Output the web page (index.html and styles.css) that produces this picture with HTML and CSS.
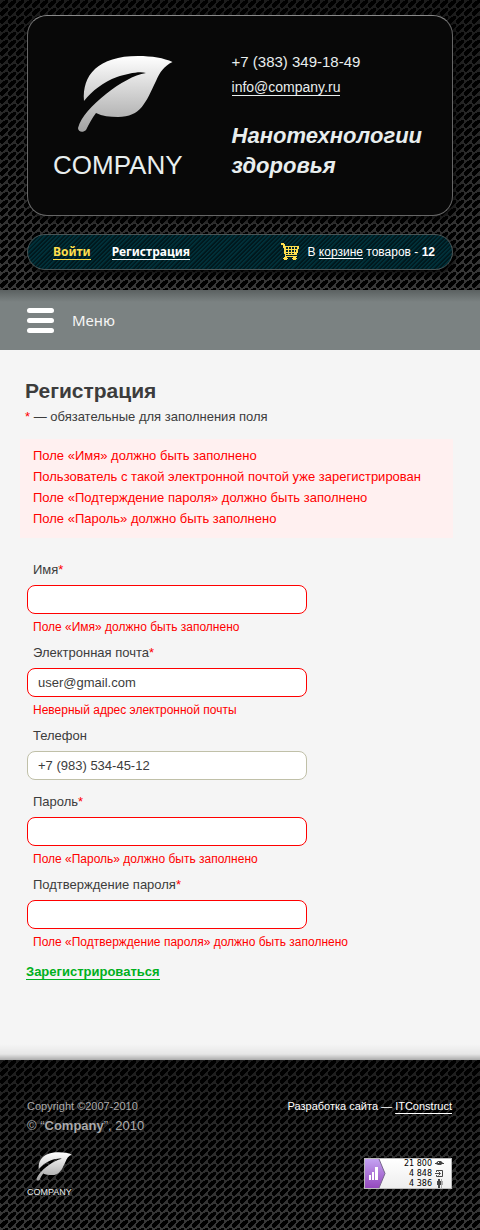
FILE: index.html
```html
<!DOCTYPE html>
<html lang="ru">
<head>
<meta charset="utf-8">
<meta name="viewport" content="width=device-width, initial-scale=1">
<title>Регистрация</title>
<link rel="stylesheet" href="styles.css">
</head>
<body>
<svg class="defs" aria-hidden="true">
  <defs>
    <linearGradient id="leaf-fill" x1="0" y1="0" x2="0" y2="1">
      <stop offset="0" stop-color="#fff"/>
      <stop offset="1" stop-color="#a2a2a2"/>
    </linearGradient>
    <symbol id="leaf" viewBox="0 0 96 78">
      <path fill="url(#leaf-fill)" d="M7 46C5 20 21 1 61 1c14 0 26 2 34.500 6C87 11 83 17 79 26 69 47 64 62 41 62c-8 0-16-1-22-4-4 5-7 11-10 17C6 78 1 77 1 73c3-11 14-23 28-34C43 28 57 20 69 18c-7-2-19 1-29 4C26 27 15 36 7 46Z"/>
    </symbol>
  </defs>
</svg>

<header class="header">
  <div class="card">
    <a class="logo" href="#">
      <svg class="logo-leaf"><use href="#leaf"/></svg>
      <span class="logo-name">COMPANY</span>
    </a>
    <div class="contacts">
      <span class="phone">+7 (383) 349-18-49</span>
      <a class="mail" href="#">info@company.ru</a>
      <p class="slogan">Нанотехнологии здоровья</p>
    </div>
  </div>
  <div class="userbar">
    <a class="login" href="#">Войти</a>
    <a class="signup" href="#">Регистрация</a>
    <div class="cart">
      <svg class="cart-icon" viewBox="0 0 18 18" shape-rendering="crispEdges" aria-hidden="true">
        <path fill="#ffdf4d" d="M0 0h3v1h1v2h14v3h-1v4h-1v2H5v1h11v1h-1v1h1v1h-1v1h-3v-1h-1v-1h1v-1H6v1h1v1H6v1H3v-1H2v-1h1v-1h1v-3H3V5H2V2H0z"/>
        <path fill="#00262e" d="M5 4h2v2H5zM8 4h2v2H8zM11 4h2v2h-2zM14 4h2v2h-2zM5 7h2v2H5zM8 7h2v2H8zM11 7h2v2h-2zM14 7h1v2h-1zM5 10h2v1H5zM8 10h2v1H8zM11 10h2v1h-2z"/>
      </svg>
      <span>В <a class="cart-link" href="#">корзине</a> товаров - <b>12</b></span>
    </div>
  </div>
</header>

<nav class="menu">
  <button class="menu-button" type="button">
    <span class="burger"><i></i><i></i><i></i></span>
    Меню
  </button>
</nav>

<main class="content">
  <h1>Регистрация</h1>
  <p class="note"><span class="star">*</span> — обязательные для заполнения поля</p>
  <ul class="errors">
    <li>Поле «Имя» должно быть заполнено</li>
    <li>Пользователь с такой электронной почтой уже зарегистрирован</li>
    <li>Поле «Подтерждение пароля» должно быть заполнено</li>
    <li>Поле «Пароль» должно быть заполнено</li>
  </ul>
  <form class="form">
    <div class="field invalid">
      <label for="name">Имя<span class="star">*</span></label>
      <input id="name" type="text">
      <p class="hint">Поле «Имя» должно быть заполнено</p>
    </div>
    <div class="field invalid">
      <label for="email">Электронная почта<span class="star">*</span></label>
      <input id="email" type="text" value="user@gmail.com">
      <p class="hint">Неверный адрес электронной почты</p>
    </div>
    <div class="field">
      <label for="phone">Телефон</label>
      <input id="phone" type="text" value="+7 (983) 534-45-12">
    </div>
    <div class="field invalid">
      <label for="password">Пароль<span class="star">*</span></label>
      <input id="password" type="password">
      <p class="hint">Поле «Пароль» должно быть заполнено</p>
    </div>
    <div class="field invalid">
      <label for="confirm">Подтверждение пароля<span class="star">*</span></label>
      <input id="confirm" type="password">
      <p class="hint">Поле «Подтверждение пароля» должно быть заполнено</p>
    </div>
    <button class="submit" type="submit">Зарегистрироваться</button>
  </form>
</main>

<footer class="footer">
  <div class="footer-left">
    <p class="copyright">Copyright ©2007-2010</p>
    <p class="owner">© “<b>Company</b>”, 2010</p>
    <a class="logo logo-small" href="#">
      <svg class="logo-leaf"><use href="#leaf"/></svg>
      <span class="logo-name">COMPANY</span>
    </a>
  </div>
  <div class="footer-right">
    <p class="developer">Разработка сайта — <a href="#">ITConstruct</a></p>
    <div class="counter">
      <svg class="counter-mark" viewBox="0 0 22 29" aria-hidden="true">
        <defs><linearGradient id="violet" x1="0" y1="0" x2="0" y2="1"><stop offset="0" stop-color="#c4a3f2"/><stop offset="1" stop-color="#9549be"/></linearGradient></defs>
        <path fill="url(#violet)" d="M0 0h14l6 14.500L14 29H0z"/>
        <path fill="none" stroke="#77658b" d="M14 0l6 14.500L14 29"/>
        <path fill="#fff" d="M4 16h2v5H4zM7 13h2v8H7zM10 8h3v13h-3z"/>
      </svg>
      <div class="counter-rows">
        <span>21 800</span>
        <svg viewBox="0 0 9 9" aria-hidden="true"><path fill="#444" d="M0 4h1l2-2h3l2 2h1v1H7L6 6H3L1 5H0z"/><path fill="#fff" d="M3 3h1v1H3z"/></svg>
        <span>4 848</span>
        <svg viewBox="0 0 9 9" aria-hidden="true"><path fill="none" stroke="#444" d="M1.500 3V1.500h6v6h-6V6M0 4.500h5M3.500 2.500l2 2-2 2"/></svg>
        <span>4 386</span>
        <svg viewBox="0 0 9 9" aria-hidden="true"><path fill="#444" d="M3 0h2v2H3zM2 2h4v4H5v3H3V6H2z"/><path fill="#aaa" d="M6 0h1v2h1v4H7v3H6z"/></svg>
      </div>
    </div>
  </div>
</footer>
</body>
</html>
```
FILE: styles.css
```css
:root {
  --weave: url("data:image/svg+xml,%3Csvg xmlns='http://www.w3.org/2000/svg' width='8' height='8' shape-rendering='crispEdges'%3E%3Crect width='8' height='8' fill='%23383838'/%3E%3Cpath d='M5 0h3v3h-1v1h-1v1h-1v1h-1v1h-1v1h-2v-1h-1v-3h1v-1h1v-1h1v-1h2z' fill='%23000'/%3E%3C/svg%3E");
}

* {
  box-sizing: border-box;
}

body {
  margin: 0;
  background: #f5f5f5;
  color: #3c3c3c;
  font: 13px/20px "Liberation Sans", Arial, sans-serif;
}

h1, p, ul {
  margin: 0;
  padding: 0;
}

.defs {
  position: absolute;
  width: 0;
  height: 0;
}

.header {
  padding: 15px 27px 20px;
  background: linear-gradient(rgba(0, 0, 0, .5), rgba(0, 0, 0, 0)), var(--weave);
}

.card {
  display: flex;
  gap: 49px;
  padding: 33px 20px 30px 25px;
  border: 1px solid #666;
  border-top-color: #888;
  border-radius: 20px;
  background: #080808;
  box-shadow: 3px 3px 8px rgba(0, 0, 0, .8);
}

.logo {
  display: flex;
  flex-direction: column;
  color: #e8eeee;
  text-decoration: none;
}

.logo-leaf {
  width: 96px;
  height: 78px;
  margin: 6px 0 12px 24px;
}

.logo-name {
  font-size: 26px;
  line-height: 40px;
}

.contacts {
  display: flex;
  flex-direction: column;
  align-items: flex-start;
  color: #e8eeee;
}

.phone {
  font-size: 15px;
  line-height: 26px;
}

.mail {
  margin-top: 4px;
  border-bottom: 1px solid;
  color: inherit;
  font-size: 14px;
  line-height: 16px;
  text-decoration: none;
}

.slogan {
  margin-top: 25px;
  font-size: 22px;
  font-weight: bold;
  font-style: italic;
  line-height: 30px;
}

.userbar {
  display: flex;
  align-items: center;
  gap: 21px;
  height: 36px;
  margin-top: 18px;
  padding: 0 17px 0 25px;
  border: 1px solid #4a5556;
  border-radius: 18px;
  background: repeating-linear-gradient(135deg, #003039 0 1px, #00181d 2px 3px);
  box-shadow: 2px 3px 6px #000;
  color: #fff;
  font-size: 12px;
}

.login, .signup {
  border-bottom: 1px solid;
  color: #fff;
  font: bold 12px/14px "Noto Sans", Tahoma, sans-serif;
  text-decoration: none;
}

.login {
  color: #ffdf4d;
}

.cart {
  display: flex;
  align-items: center;
  gap: 9px;
  margin-left: auto;
}

.cart-icon {
  width: 18px;
  height: 18px;
}

.cart-link {
  color: inherit;
  text-underline-offset: 2px;
}

.menu {
  padding: 10px 27px;
  background: linear-gradient(#5b6161, rgba(91, 97, 97, 0) 12px), #7b8282;
}

.menu-button {
  display: flex;
  align-items: center;
  gap: 18px;
  height: 40px;
  padding: 0;
  border: 0;
  background: none;
  color: #f5f5f5;
  font: 15px/20px "Noto Sans", Tahoma, sans-serif;
}

.burger {
  display: grid;
  gap: 5px;
  width: 27px;
}

.burger i {
  height: 5px;
  border-radius: 3px;
  background: #fff;
}

.content {
  padding: 29px 27px 80px 25px;
  background: linear-gradient(rgba(0, 0, 0, 0) calc(100% - 16px), rgba(0, 0, 0, .06) calc(100% - 6px), rgba(0, 0, 0, .3)), #f5f5f5;
}

h1 {
  font-size: 21px;
  line-height: 24px;
}

.note {
  margin-top: 4px;
}

.star {
  color: #f00;
}

.errors {
  margin: 12px 0 0 -5px;
  padding: 6px 13px 9px;
  background: #fff0f0;
  color: #f00;
  line-height: 21px;
  list-style: none;
}

.form {
  display: flex;
  flex-direction: column;
  align-items: flex-start;
  padding: 22px 0 0 2px;
}

.field {
  display: flex;
  flex-direction: column;
  width: 100%;
  margin-bottom: 12px;
}

.field.invalid {
  margin-bottom: 6px;
}

.field label,
.hint {
  padding-left: 6px;
}

.field input {
  width: 280px;
  max-width: 100%;
  height: 29px;
  margin: 5px 0 3px;
  padding: 0 10px;
  border: 1px solid #c0c0a8;
  border-radius: 8px;
  background: #fff;
  color: inherit;
  font: inherit;
}

.field:not(.invalid) input {
  margin-bottom: 0;
}

.field.invalid input {
  border-color: #f00;
}

.hint {
  color: #f00;
  font-size: 12px;
}

.submit {
  margin: 6px 0 0 -1px;
  padding: 0;
  border: 0;
  border-bottom: 1px solid #00b020;
  background: none;
  color: #00b020;
  font: bold 13px/15px "Liberation Sans", Arial, sans-serif;
}

.footer {
  display: flex;
  justify-content: space-between;
  padding: 36px 28px 32px 27px;
  background: linear-gradient(rgba(0, 0, 0, .5), rgba(0, 0, 0, 0)), var(--weave);
  color: #aaa;
}

.copyright,
.developer {
  font-size: 11px;
}

.logo-small {
  margin-top: 16px;
}

.logo-small .logo-leaf {
  width: 36px;
  height: 29px;
  margin: 0 0 5px 9px;
}

.logo-small .logo-name {
  font-size: 9px;
  line-height: 12px;
}

.footer-right {
  display: flex;
  flex-direction: column;
  align-items: flex-end;
  gap: 42px;
  color: #fff;
}

.developer a {
  color: inherit;
  text-underline-offset: 3px;
}

.counter {
  display: flex;
  justify-content: space-between;
  width: 88px;
  height: 31px;
  padding-right: 7px;
  border: 1px solid #bbb;
  background: linear-gradient(#fff, #eee);
}

.counter-mark {
  width: 22px;
  height: 29px;
}

.counter-rows {
  display: grid;
  grid-template-columns: auto 9px;
  align-items: center;
  column-gap: 3px;
  color: #000;
  font: 8px/9px "DejaVu Sans", Verdana, sans-serif;
  text-align: right;
}

.counter-rows svg {
  width: 9px;
  height: 9px;
}
```
